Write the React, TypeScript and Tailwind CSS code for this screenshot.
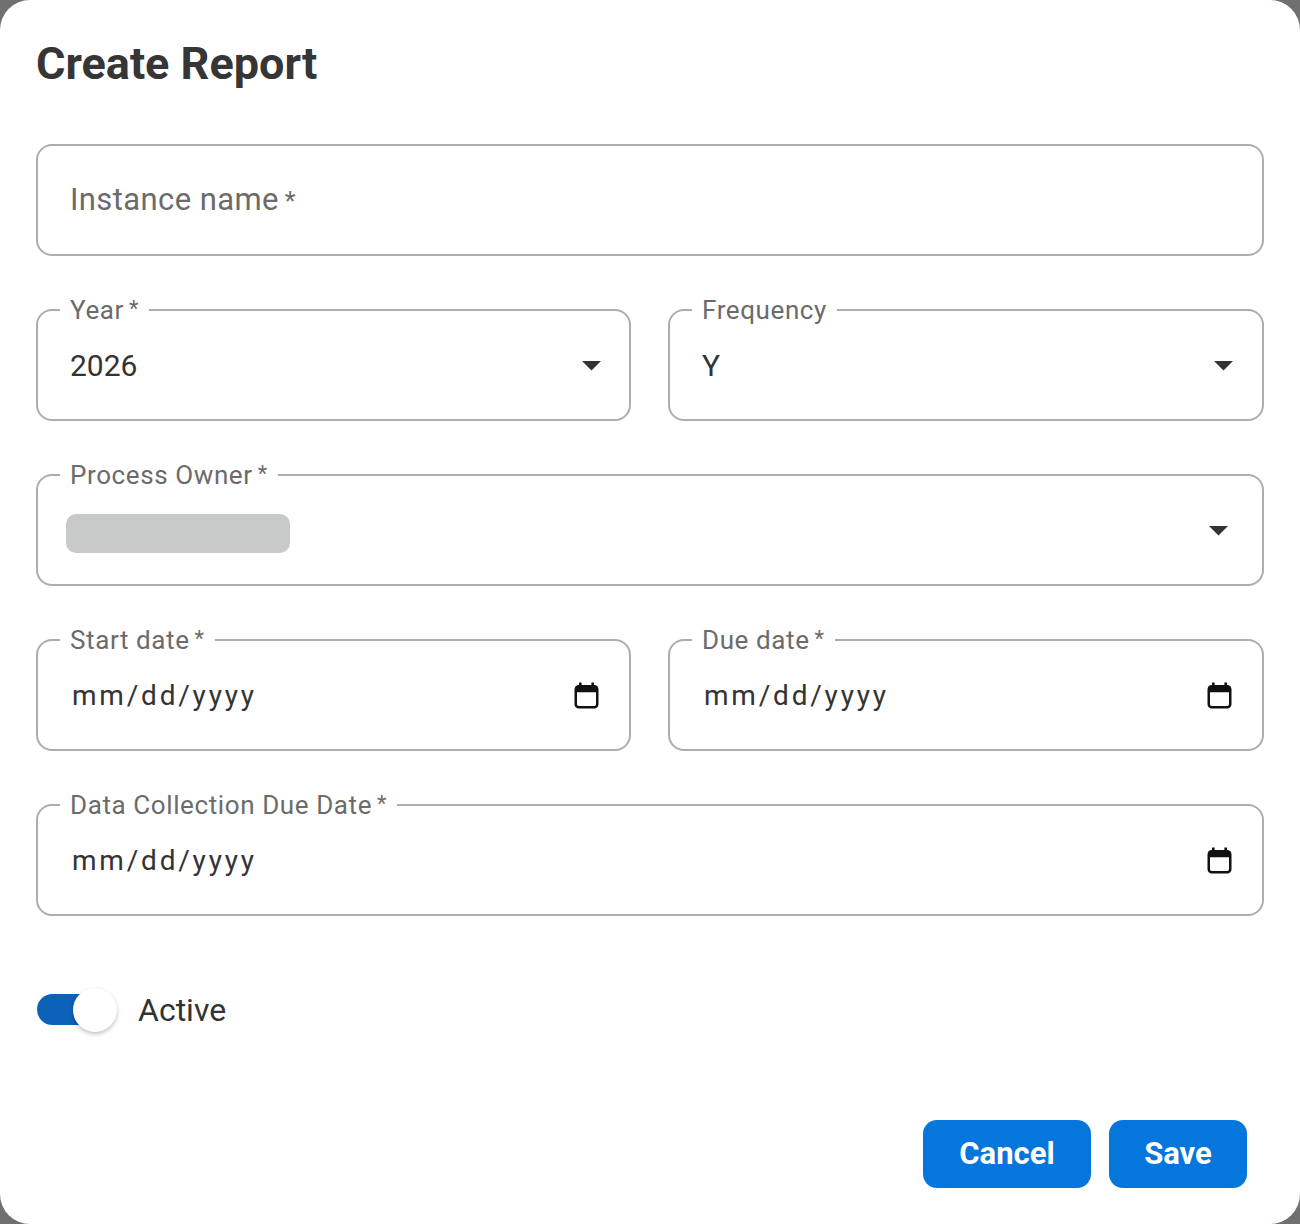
import type { ReactNode } from "react";

const font = { fontFamily: "Roboto, 'Liberation Sans', sans-serif" };

function ArrowDrop() {
  return (
    <svg width="19" height="10" viewBox="0 0 19 10" aria-hidden>
      <path d="M0 0h19l-9.5 9.5z" fill="#333" />
    </svg>
  );
}

function CalendarIcon() {
  return (
    <svg width="25" height="27" viewBox="0 0 25 27" aria-hidden>
      <rect x="1.75" y="4.25" width="21.5" height="21" rx="3" fill="none" stroke="#111" strokeWidth="2.5" />
      <rect x="1.75" y="4.25" width="21.5" height="6" fill="#111" />
      <rect x="5" y="0.5" width="2.6" height="5" fill="#111" />
      <rect x="17.4" y="0.5" width="2.6" height="5" fill="#111" />
    </svg>
  );
}

/** Outlined field with notched label (fieldset + legend). */
function Field({
  label,
  required = true,
  children,
  className = "",
}: {
  label: string;
  required?: boolean;
  children: ReactNode;
  className?: string;
}) {
  return (
    <fieldset className="m-0 min-w-0 rounded-[16px] border-2 border-[#adadad] p-0">
      <legend className="ml-[22px] block h-[28px] px-[10px] text-[26px] leading-[28px] tracking-[0.6px] text-[#6b6b6b]">
        {label}
        {required ? <span className="ml-[5px] align-top text-[22px] leading-[26px]">*</span> : null}
      </legend>
      <div className={`flex h-[95px] items-center justify-between ${className}`}>{children}</div>
    </fieldset>
  );
}

function DateValue() {
  return (
    <>
      <span className="text-[28px] tracking-[2.8px] text-[#333]">mm/dd/yyyy</span>
      <CalendarIcon />
    </>
  );
}

export default function App() {
  return (
    <div className="min-h-screen bg-[#707070]" style={font}>
      <div className="flex h-[1224px] w-[1300px] flex-col rounded-[30px] bg-white px-9">
        <h1 className="pt-[38px] text-[45px] font-bold leading-[52px] text-[#363636]">Create Report</h1>

        <div className="mt-[54px] flex h-[112px] items-center rounded-[16px] border-2 border-[#adadad] px-[32px]">
          <span className="text-[31px] tracking-[0.4px] text-[#6b6b6b]">
            Instance name<span className="ml-[6px] text-[25px]">*</span>
          </span>
        </div>

        <div className="mt-10 flex flex-col gap-10">
          <div className="grid grid-cols-[595px_596px] gap-[37px]">
            <Field label="Year" className="pb-3 pl-[32px] pr-[28px]">
              <span className="text-[30px] text-[#333]">2026</span>
              <ArrowDrop />
            </Field>
            <Field label="Frequency" required={false} className="pb-3 pl-[32px] pr-[29px]">
              <span className="text-[30px] text-[#333]">Y</span>
              <ArrowDrop />
            </Field>
          </div>

          <Field label="Process Owner" className="pb-[6px] pl-[28px] pr-[34px]">
            <span className="h-[39px] w-[224px] rounded-[10px] bg-[#c8c9c9]" />
            <span className="-mt-[6px]">
              <ArrowDrop />
            </span>
          </Field>

          <div className="grid grid-cols-[595px_596px] gap-[37px]">
            <Field label="Start date" className="pb-3 pl-[34px] pr-[30px]">
              <DateValue />
            </Field>
            <Field label="Due date" className="pb-3 pl-[34px] pr-[30px]">
              <DateValue />
            </Field>
          </div>

          <Field label="Data Collection Due Date" className="pb-3 pl-[34px] pr-[30px]">
            <DateValue />
          </Field>
        </div>

        <div className="mt-[70px] flex items-center gap-[21px]">
          <div className="relative h-[44px] w-[81px]">
            <div className="absolute left-[1px] top-[6px] h-[31px] w-[72px] rounded-full bg-[#0b62b7]" />
            <div className="absolute left-[37px] top-0 h-[44px] w-[44px] rounded-full bg-white shadow-[0_2px_4px_rgba(0,0,0,0.25)]" />
          </div>
          <span className="text-[32px] text-[#333]">Active</span>
        </div>

        <div className="mt-auto mr-[17px] flex justify-end gap-[18px] pb-[36px]">
          <button className="h-[68px] w-[168px] rounded-[14px] bg-[#0576db] text-[31px] font-bold text-white">
            Cancel
          </button>
          <button className="h-[68px] w-[138px] rounded-[14px] bg-[#0576db] text-[31px] font-bold text-white">
            Save
          </button>
        </div>
      </div>
    </div>
  );
}
